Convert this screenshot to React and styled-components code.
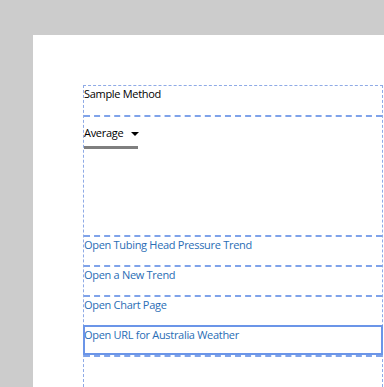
import React from 'react'
import styled, { createGlobalStyle } from 'styled-components'

const links = [
  'Open Tubing Head Pressure Trend',
  'Open a New Trend',
  'Open Chart Page',
  'Open URL for Australia Weather',
]

export default function App() {
  return (
    <>
      <Global />
      <Page>
        <Panel>
          <Frame>
            <TitleRow>Sample Method</TitleRow>
            <SelectRow>
              <Select>
                Average
                <Caret />
              </Select>
            </SelectRow>
            {links.map((l, i) => (
              <LinkRow key={l} $focused={i === links.length - 1}>
                <LinkText>{l}</LinkText>
              </LinkRow>
            ))}
            <Filler />
          </Frame>
        </Panel>
      </Page>
    </>
  )
}

const Global = createGlobalStyle`
  html, body {
    margin: 0;
    padding: 0;
    background: #cccccc;
    overflow: hidden;
  }
  body {
    font-family: 'Open Sans', 'Noto Sans', sans-serif;
  }
`

const Page = styled.div`
  height: 387px;
  padding: 35px 0 0 33px;
  box-sizing: border-box;
`

const Panel = styled.div`
  background: #fff;
  height: 100%;
  padding: 50px 0 0 50px;
  box-sizing: border-box;
`

const Frame = styled.div`
  width: 300px;
  height: 100%;
  box-sizing: border-box;
  border: 1px dashed #8eaae6;
  border-bottom: none;
  display: flex;
  flex-direction: column;
`

const TitleRow = styled.div`
  height: 29px;
  font-size: 11px;
  letter-spacing: -0.3px;
  line-height: 16px;
  color: #000;
  border-bottom: 2px dashed #7fa3ea;
`

const SelectRow = styled.div`
  height: 120px;
  flex-shrink: 0;
  padding-top: 8px;
  box-sizing: border-box;
  border-bottom: 2px dashed #7fa3ea;
`

const Select = styled.div`
  width: 54px;
  font-size: 11px;
  letter-spacing: -0.3px;
  line-height: 16px;
  color: #000;
  padding-bottom: 5px;
  border-bottom: 3px solid #7f7f7f;
  display: flex;
  align-items: center;
  gap: 8px;
  white-space: nowrap;
`

const Caret = styled.span`
  width: 0;
  height: 0;
  border-left: 4px solid transparent;
  border-right: 4px solid transparent;
  border-top: 4px solid #000;
  margin-top: 2px;
`

const LinkRow = styled.div`
  height: 30px;
  flex-shrink: 0;
  box-sizing: border-box;
  border-bottom: 2px dashed #7fa3ea;
  position: relative;
  ${p => p.$focused && `
    &::after {
      content: '';
      position: absolute;
      left: -1px;
      right: -1px;
      top: -2px;
      bottom: 0;
      border: 2px solid #6b95e8;
    }
  `}
`

const LinkText = styled.div`
  font-size: 11px;
  letter-spacing: -0.3px;
  line-height: 16px;
  color: #2a6db5;
`

const Filler = styled.div`
  flex: 1;
`
